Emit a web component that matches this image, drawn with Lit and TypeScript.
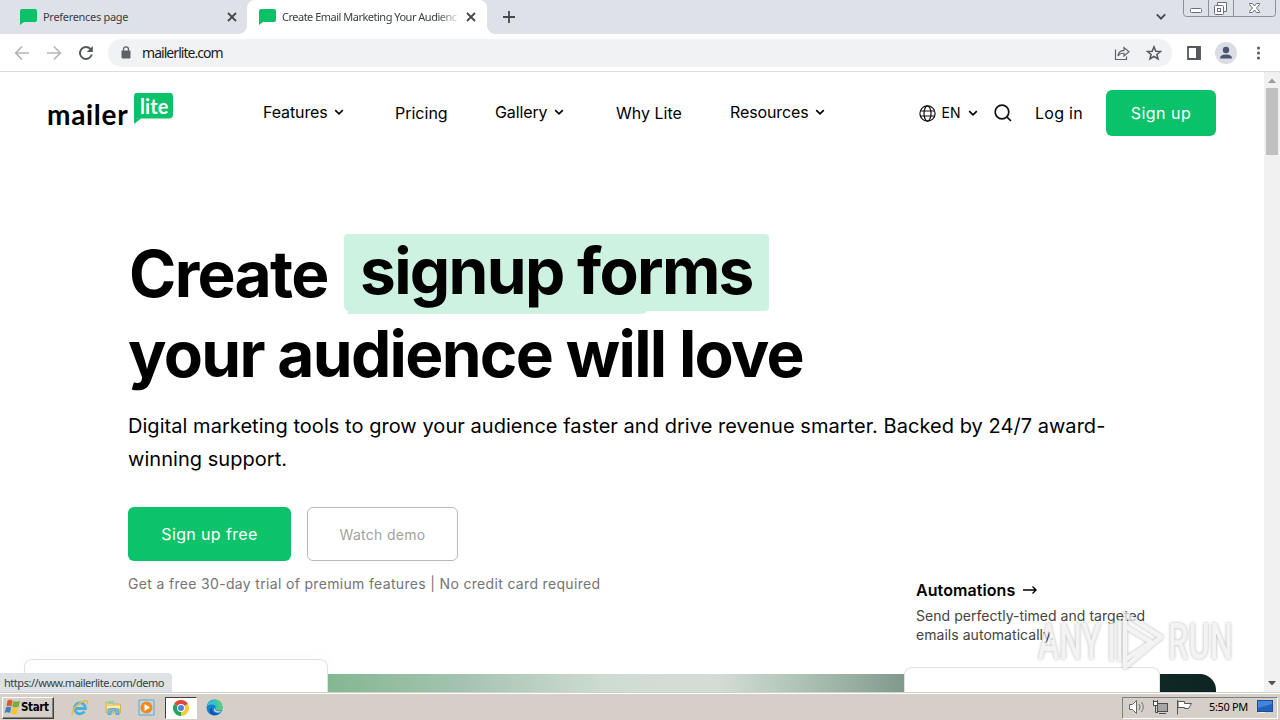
import { LitElement, html, css, svg } from "lit";
import { customElement, property } from "lit/decorators.js";

const chevron = (size = 10) => html`
  <svg class="chevron" width=${size} height=${size} viewBox="0 0 10 10" fill="none" stroke="currentColor" stroke-width="1.7">
    <path d="M1.2 3.2 5 6.8 8.8 3.2" />
  </svg>
`;

const favicon = html`
  <svg class="favicon" width="17" height="16" viewBox="0 0 17 16">
    <path d="M2 0h13q2 0 2 2v9q0 2-2 2H4L0 16V2Q0 0 2 0z" fill="#0ac168" />
  </svg>
`;

@customElement("browser-chrome")
export class BrowserChrome extends LitElement {
  static styles = css`
    :host {
      display: block;
      font-family: "Noto Sans", "Open Sans", sans-serif;
      color: #3c4043;
    }

    svg {
      display: block;
      flex: none;
    }

    .tabs {
      display: flex;
      height: 34px;
      background: #dee1e8;
    }

    .tab {
      display: flex;
      align-items: center;
      box-sizing: border-box;
      width: 247px;
      padding: 0 10px 1px 20px;
      font-size: 11px;
    }

    .tab.active {
      width: 240px;
      padding: 0 11px 1px 12px;
      background: #fff;
      border-radius: 8px 8px 0 0;
    }

    .title {
      width: 177px;
      margin: 0 11px 0 6px;
      white-space: nowrap;
      letter-spacing: -0.3px;
    }

    .active .title {
      margin-right: 7px;
      letter-spacing: -0.5px;
      mask-image: linear-gradient(to right, #000 155px, transparent 180px);
    }

    .curve {
      align-self: flex-end;
      width: 8px;
      height: 8px;
      background: radial-gradient(circle at 100% 0, #dee1e8 7.5px, #fff 8px);
    }

    .curve.left {
      margin-left: -8px;
      background: radial-gradient(circle at 0 0, #dee1e8 7.5px, #fff 8px);
    }

    .plus {
      margin: 11px 0 0 8px;
    }

    .search {
      margin: 13px 17px 0 auto;
    }

    .controls {
      margin-right: 3px;
    }

    .toolbar {
      display: flex;
      align-items: center;
      height: 37px;
      padding-left: 14px;
      border-bottom: 1px solid #dadce0;
      background: #fff;
    }

    .toolbar > svg {
      margin-right: 16px;
    }

    .toolbar > svg.reload {
      margin-right: 14px;
    }

    .toolbar > svg.more {
      margin-right: 0;
    }

    .omnibox {
      display: flex;
      flex: none;
      align-items: center;
      box-sizing: border-box;
      width: 1064px;
      height: 28px;
      padding: 0 10px 0 13px;
      border-radius: 14px;
      background: #f0f2f4;
      font-size: 14px;
      color: #202124;
    }

    .url {
      flex: 1;
      margin-left: 11px;
      letter-spacing: -0.95px;
    }

    .star {
      margin-left: 16px;
    }

    .side {
      margin-left: 15px;
    }

    .toolbar > svg.side {
      margin-right: 14px;
    }
  `;

  private close = html`
    <svg width="10" height="10" viewBox="0 0 10 10" stroke="#45484c" stroke-width="1.8">
      <path d="M1 1 9 9M9 1 1 9" />
    </svg>
  `;

  render() {
    return html`
      <div class="tabs">
        <div class="tab">
          ${favicon}<span class="title">Preferences page</span>${this.close}
        </div>
        <span class="curve left"></span>
        <div class="tab active">
          ${favicon}<span class="title">Create Email Marketing Your Audienc</span>${this.close}
        </div>
        <span class="curve"></span>
        <svg class="plus" width="12" height="12" viewBox="0 0 12 12" stroke="#45484c" stroke-width="1.8">
          <path d="M6 0V12M0 6H12" />
        </svg>
        <svg class="search" width="10" height="8" viewBox="0 0 10 8" fill="none" stroke="#45484c" stroke-width="1.9">
          <path d="M.8 1.3 5 5.7 9.2 1.3" />
        </svg>
        <svg class="controls" width="94" height="18" viewBox="0 0 94 18" fill="none" stroke="#8b909a">
          <path d="M.5 0V13.500q0 3 3 3H89.500q3 0 3-3V0M25.500 0V16M50.500 0V16" />
          <g stroke="#6a6f7b">
            <rect x="7.500" y="8.500" width="11" height="4" rx="1" fill="#fff" />
            <path d="M34.500 5V2.500H43.500V11.500H41" fill="#fff" />
            <rect x="31.500" y="5.500" width="9" height="9" rx="1" fill="#fff" />
            <rect x="34.500" y="8.500" width="3" height="3" />
            <path d="M66.500 3.500h3l2 2.500 2-2.500h3v1L73.500 8l3 3.500v1h-3l-2-2.500-2 2.500h-3v-1L69.500 8l-3-3.500z" fill="#fff" />
          </g>
        </svg>
      </div>
      <div class="toolbar">
        <svg width="16" height="16" viewBox="0 0 16 16" fill="none" stroke="#b4b6b9" stroke-width="1.700">
          <path d="M15 8H2M8 1.500 1.700 8 8 14.500" />
        </svg>
        <svg width="16" height="16" viewBox="0 0 16 16" fill="none" stroke="#b4b6b9" stroke-width="1.700">
          <path d="M1 8H14M8 1.500 14.300 8 8 14.500" />
        </svg>
        <svg class="reload" width="16" height="16" viewBox="0 0 16 16">
          <path d="M13.800 9.500A6 6 0 1 1 12.500 4" fill="none" stroke="#55585c" stroke-width="1.900" />
          <path d="M14.800 1V7H8.800z" fill="#55585c" />
        </svg>
        <div class="omnibox">
          <svg width="10" height="13" viewBox="0 0 10 13">
            <rect x="0.500" y="4.500" width="9" height="8" rx="1" fill="#5f6368" />
            <path d="M2.500 5V3.300a2.500 2.500 0 0 1 5 0V5" fill="none" stroke="#5f6368" stroke-width="1.300" />
          </svg>
          <span class="url">mailerlite.com</span>
          <svg width="16" height="16" viewBox="0 0 16 16" fill="none" stroke="#5f6368" stroke-width="1.200">
            <path d="M1.500 4.500V14.500H12.500V11.500M4 11Q4.500 5.500 10 5.300V2.500L15 6.800 10 11V8.300Q6 8 4 11z" />
          </svg>
          <svg class="star" width="16" height="16" viewBox="0 0 16 16" fill="none" stroke="#55585c" stroke-width="1.500">
            <path d="M8 1.800 9.800 6.200 14.500 6.500 10.900 9.500 12.100 14 8 11.500 3.900 14 5.100 9.500 1.500 6.500 6.200 6.200z" />
          </svg>
        </div>
        <svg class="side" width="14" height="14" viewBox="0 0 14 14">
          <path d="M1 1H13V13H1z" fill="none" stroke="#55585c" stroke-width="1.800" />
          <path d="M9 1H13.500V13H9z" fill="#55585c" />
        </svg>
        <svg width="22" height="22" viewBox="0 0 22 22">
          <circle cx="11" cy="11" r="11" fill="#dadde3" />
          <circle cx="11" cy="8" r="3.200" fill="#4a5573" />
          <path d="M5 16.500Q5 12.500 11 12.500T17 16.500z" fill="#4a5573" />
        </svg>
        <svg class="more" width="12" height="14" viewBox="0 0 12 14" fill="#55585c">
          <circle cx="5.500" cy="2" r="1.500" /><circle cx="5.500" cy="7" r="1.500" /><circle cx="5.500" cy="12" r="1.500" />
        </svg>
      </div>
    `;
  }
}

@customElement("site-header")
export class SiteHeader extends LitElement {
  static styles = css`
    :host {
      display: flex;
      align-items: center;
      box-sizing: border-box;
      height: 82px;
      padding: 0 48px 0 47px;
      font: 16px/20px Inter, sans-serif;
      color: #000;
    }

    svg {
      display: block;
    }

    .logo {
      display: flex;
      align-items: flex-start;
      width: 216px;
      height: 45px;
      font-family: Lato, "Open Sans", sans-serif;
    }

    .mailer {
      width: 87px;
      margin-top: 8px;
      font-size: 28px;
      line-height: 30px;
      font-weight: 700;
      letter-spacing: 0.7px;
    }

    .lite {
      display: block;
      box-sizing: border-box;
      width: 40px;
      height: 33px;
      margin-top: 2px;
      padding: 2px 0 0 6px;
      background: #09c269;
      clip-path: path("M4 0H35Q39 0 39 4V22Q39 26 35 26H7L0 31.500V4Q0 0 4 0z");
      color: #fff;
      font-size: 20px;
      line-height: 22px;
      font-weight: 700;
      letter-spacing: 0.1px;
    }

    nav {
      display: grid;
      grid-template-columns: 132px 100px 121px 114px 188.5px;
      letter-spacing: -0.12px;
    }

    .link {
      display: flex;
      align-items: center;
      gap: 6.5px;
      padding-bottom: 2px;
      white-space: nowrap;
    }

    .flat {
      padding-bottom: 0;
      letter-spacing: 0;
    }

    .actions {
      display: flex;
      align-items: center;
      flex: 1;
    }

    .lang {
      margin: 0 7.5px 0 6px;
      font-size: 14px;
    }

    .glass {
      margin-left: 16px;
    }

    .login {
      flex: 1;
      margin-left: 23px;
      white-space: nowrap;
      letter-spacing: 0.3px;
    }

    .signup {
      display: grid;
      place-items: center;
      width: 110px;
      height: 46px;
      border-radius: 6px;
      background: #09c269;
      color: #fff;
      letter-spacing: 0.5px;
    }
  `;

  private links = [
    { label: "Features", menu: true },
    { label: "Pricing", menu: false },
    { label: "Gallery", menu: true },
    { label: "Why Lite", menu: false },
    { label: "Resources", menu: true },
  ];

  render() {
    return html`
      <div class="logo"><span class="mailer">mailer</span><span class="lite">lite</span></div>
      <nav>
        ${this.links.map(
          (link) => html`
            <span class="link ${link.menu ? "" : "flat"}">${link.label}${link.menu ? chevron() : ""}</span>
          `
        )}
      </nav>
      <div class="actions">
        <svg width="17" height="17" viewBox="0 0 17 17" fill="none" stroke="#111" stroke-width="1.2">
          <circle cx="8.500" cy="8.500" r="7.600" />
          <ellipse cx="8.500" cy="8.500" rx="3.500" ry="7.600" />
          <path d="M1.500 6H15.500M1.500 11H15.500" />
        </svg>
        <span class="lang">EN</span>${chevron()}
        <svg class="glass" width="18" height="18" viewBox="0 0 18 18" fill="none" stroke="#111" stroke-width="1.700">
          <circle cx="8" cy="8" r="6.800" /><path d="M12.800 12.800 17 17" />
        </svg>
        <span class="login">Log in</span>
        <span class="signup">Sign up</span>
      </div>
    `;
  }
}

@customElement("hero-section")
export class HeroSection extends LitElement {
  static styles = css`
    :host {
      display: block;
      padding: 80px 128px 0;
      font-family: Inter, sans-serif;
      color: #000;
    }

    h1 {
      margin: 0;
      font-size: 64px;
      line-height: 80px;
      font-weight: 700;
      letter-spacing: -1.68px;
      white-space: nowrap;
    }

    .line {
      display: flex;
      height: 80px;
      align-items: flex-start;
    }

    .create {
      box-sizing: border-box;
      width: 216px;
      padding-left: 1px;
    }

    .highlight {
      box-sizing: border-box;
      width: 425px;
      height: 80px;
      padding-left: 16px;
      line-height: 74px;
      background: #cdf2e1;
      clip-path: path("M4 0H421Q425 0 425 4V73Q425 77 421 77H303Q301 80 298 80H3Q4 79 4 77Q0 76 0 71V4Q0 0 4 0z");
    }

    .lead {
      margin: 16px 0 0;
      font-size: 20px;
      line-height: 33px;
      letter-spacing: 0.045px;
      white-space: nowrap;
    }

    .buttons {
      display: flex;
      gap: 16px;
      margin-top: 31px;
    }

    .button {
      display: grid;
      place-items: center;
      box-sizing: border-box;
      height: 54px;
      border-radius: 6px;
    }

    .primary {
      width: 163px;
      background: #0cc36b;
      color: #fff;
      font-size: 16px;
      letter-spacing: 0.37px;
    }

    .secondary {
      width: 151px;
      border: 1px solid #b9b9b9;
      color: #a2a2a2;
      font-size: 14px;
      letter-spacing: 0.3px;
    }

    .note {
      margin: 13px 0 0;
      font-size: 14px;
      line-height: 20px;
      color: #747474;
      letter-spacing: 0.33px;
      white-space: nowrap;
    }
  `;

  render() {
    return html`
      <h1>
        <div class="line"><span class="create">Create</span><span class="highlight">signup forms</span></div>
        <div class="line">your audience will love</div>
      </h1>
      <p class="lead">
        Digital marketing tools to grow your audience faster and drive revenue smarter. Backed by 24/7 award-<br />winning support.
      </p>
      <div class="buttons">
        <span class="button primary">Sign up free</span>
        <span class="button secondary">Watch demo</span>
      </div>
      <p class="note">Get a free 30-day trial of premium features | No credit card required</p>
    `;
  }
}

@customElement("feature-preview")
export class FeaturePreview extends LitElement {
  static styles = css`
    :host {
      position: relative;
      display: flex;
      flex-direction: column;
      flex: 1;
      justify-content: space-between;
      min-height: 0;
      font-family: Inter, sans-serif;
    }

    .caption {
      margin: -14px 0 0 916px;
      white-space: nowrap;
    }

    .heading {
      display: flex;
      align-items: center;
      gap: 8px;
      font-size: 16px;
      line-height: 20px;
      font-weight: 600;
      letter-spacing: 0.08px;
      color: #000;
    }

    .text {
      margin-top: 6px;
      font-size: 14px;
      line-height: 19px;
      color: #444;
      letter-spacing: 0.04px;
    }

    .banner {
      height: 18px;
      margin: 0 48px 0 128px;
      border-radius: 0 16px 0 0;
      background: linear-gradient(to right, #71ad80 0, #84b792 199px, #a3c3ae 330px, #cfdcd3 480px, #d3ddd6 590px, #abc0b3 680px, #81998d 776px, #102b28 1010px, #0d2422);
    }

    .card {
      position: absolute;
      bottom: 0;
      box-sizing: border-box;
      border: 1px solid #e0e2e2;
      border-bottom: 0;
      border-radius: 8px 8px 0 0;
      background: #fff;
    }

    .left {
      left: 24px;
      width: 304px;
      height: 33px;
      box-shadow: 0 -6px 20px rgba(0, 0, 0, 0.015);
    }

    .right {
      left: 904px;
      width: 256px;
      height: 25px;
    }
  `;

  render() {
    return html`
      <div class="caption">
        <div class="heading">
          Automations
          <svg width="14" height="10" viewBox="0 0 14 10" fill="none" stroke="#000" stroke-width="1.400">
            <path d="M0 5H13M9.500 1.500 13 5 9.500 8.500" />
          </svg>
        </div>
        <div class="text">Send perfectly-timed and targeted<br />emails automatically.</div>
      </div>
      <div class="banner"></div>
      <div class="card left"></div>
      <div class="card right"></div>
    `;
  }
}

@customElement("scroll-bar")
export class ScrollBar extends LitElement {
  static styles = css`
    :host {
      display: flex;
      flex-direction: column;
      align-items: center;
      box-sizing: border-box;
      width: 16px;
      background: #f1f1f1;
    }

    .thumb {
      width: 12px;
      height: 67px;
      margin-bottom: auto;
      background: #c1c1c1;
    }

    svg {
      display: block;
    }
  `;

  render() {
    return html`
      <svg width="16" height="16" viewBox="0 0 16 16"><path d="M4 11 8 6.500 12 11z" fill="#9b9b9b" /></svg>
      <div class="thumb"></div>
      <svg width="16" height="17" viewBox="0 0 16 17"><path d="M4 6 8 10.500 12 6z" fill="#505050" /></svg>
    `;
  }
}

@customElement("any-run-mark")
export class AnyRunMark extends LitElement {
  @property({ type: Number }) width = 210;

  static styles = css`
    :host {
      display: block;
    }

    svg {
      display: block;
      overflow: visible;
    }

    text {
      font-family: Roboto, sans-serif;
      font-size: 50px;
      font-weight: 500;
    }

    .mark {
      filter: drop-shadow(0 0 1.5px rgba(0, 0, 0, 0.4));
    }
  `;

  render() {
    return html`
      <svg class="mark" width=${this.width} height="70" viewBox="0 0 210 70" fill="#f0f0f0" opacity="0.75">
        ${svg`
          <text x="6" y="53" textLength="63" lengthAdjust="spacingAndGlyphs">ANY</text>
          <text x="136" y="53" textLength="65" lengthAdjust="spacingAndGlyphs">RUN</text>
          <path d="M79.500 16V55M87.500 14V55" fill="none" stroke="#f0f0f0" stroke-width="4" />
          <path d="M93 8 129 31 93 61V13M93 20 119 36 93 54" fill="none" stroke="#f0f0f0" stroke-width="4.500" stroke-linejoin="round" stroke-linecap="round" />
        `}
      </svg>
    `;
  }
}

@customElement("task-bar")
export class TaskBar extends LitElement {
  static styles = css`
    :host {
      display: flex;
      align-items: center;
      box-sizing: border-box;
      height: 28px;
      padding: 2px 2px 0 2px;
      border-top: 1px solid #d5cec6;
      background: #d6cfc7;
      box-shadow: inset 0 1px #fff;
      color: #000;
    }

    svg {
      display: block;
      flex: none;
    }

    .start {
      display: flex;
      align-items: center;
      box-sizing: border-box;
      width: 52px;
      height: 22px;
      padding: 0 0 2px 1px;
      border: 1px solid;
      border-color: #fff #404040 #404040 #fff;
      box-shadow: inset -1px -1px #878078;
      font: bold 11.5px "DejaVu Sans Condensed", sans-serif;
      letter-spacing: -0.35px;
    }

    .apps {
      display: flex;
      align-items: center;
      margin-left: 9px;
    }

    .app {
      display: grid;
      place-items: center;
      box-sizing: border-box;
      width: 33.5px;
      height: 22px;
    }

    .app.active {
      width: 32px;
      margin: 0 1px;
      border: 1px solid;
      border-color: #404040 #fff #fff #404040;
      background: #fff;
    }

    .tray {
      display: flex;
      align-items: center;
      box-sizing: border-box;
      width: 156px;
      height: 22px;
      margin-left: auto;
      padding: 0 0 2px 5px;
      border: 1px solid;
      border-color: #808080 #fff #fff #808080;
    }

    .tray svg {
      margin-right: 7px;
    }

    .clock {
      width: 45px;
      margin: 0 9px 0 9px;
      font: 11px "Noto Sans", sans-serif;
      letter-spacing: -0.35px;
      white-space: nowrap;
    }
  `;

  render() {
    return html`
      <div class="start">
        <svg width="17" height="16" viewBox="0 0 17 16">
          <path d="M3.500 1.500Q6 0 8.500 1.500L7.500 7.500Q5 6 2.500 7.500z" fill="#dc5a2b" />
          <path d="M9.300 2Q12 3.300 16 1.700L14.500 8Q11 9 8.300 7.800z" fill="#74ae3d" />
          <path d="M2.200 8.300Q4.700 7 7.200 8.300L6 14Q3.500 12.500 .5 13.800z" fill="#3d7fc4" />
          <path d="M8.100 8.700Q11 10 14.100 8.900L12.800 14.700Q9.500 15.700 6.900 14.500z" fill="#f6c530" />
        </svg>
        Start
      </div>
      <div class="apps">
        <span class="app">
          <svg width="18" height="18" viewBox="0 0 18 18" fill="none">
            <path d="M13.500 12.500A5.500 5.500 0 1 1 14.500 9.500H5" stroke="#48afe2" stroke-width="2.800" />
            <path d="M1.500 16C-1 13 8 2 15.500 1.500Q17.500 2 16 5.500" stroke="#e9bd3b" stroke-width="1.500" />
          </svg>
        </span>
        <span class="app">
          <svg width="17" height="17" viewBox="0 0 17 17">
            <path d="M1 3H6L7.500 5H15.500V14H1z" fill="#f1d275" stroke="#c9a548" stroke-width=".7" />
            <path d="M3 2H9V5H3z" fill="#98d0a8" />
            <path d="M2 7H15V9H2z" fill="#fbecb4" />
            <path d="M3 15.500V10.500Q8.500 8 14 10.500V15.500H11V12H6V15.500z" fill="#79c1e4" stroke="#4a94bd" stroke-width=".7" />
          </svg>
        </span>
        <span class="app">
          <svg width="17" height="17" viewBox="0 0 17 17">
            <path d="M1 1H16V16H1z" fill="#b7dcef" stroke="#6aa3c4" />
            <circle cx="8.500" cy="8.500" r="6" fill="#f28b1d" />
            <path d="M6.500 5 12 8.500 6.500 12z" fill="#fff" />
          </svg>
        </span>
        <span class="app active">
          <svg width="16" height="16" viewBox="0 0 16 16">
            <path d="M8 8 1.070 4A8 8 0 0 1 14.930 4z" fill="#df4937" />
            <path d="M8 8 14.930 4A8 8 0 0 1 8 16z" fill="#f9ca35" />
            <path d="M8 8V16A8 8 0 0 1 1.070 4z" fill="#2da05a" />
            <circle cx="8" cy="8" r="3.900" fill="#fff" /><circle cx="8" cy="8" r="3" fill="#4384ee" />
          </svg>
        </span>
        <span class="app">
          <svg width="17" height="17" viewBox="0 0 17 17">
            <circle cx="8.500" cy="8.500" r="8" fill="#1680d0" />
            <path d="M.6 8A8 8 0 0 1 16.500 8Q16.500 12 11.500 11.500Q9 11 10 9Q10 5.500 6 5.500Q2 5.500.6 8z" fill="#35c3c8" />
            <path d="M9 .6Q16 1 16.500 8Q16.500 12 11.500 11.500Q14 5 9 .6z" fill="#58cf75" />
            <path d="M6 8Q5 15 13.500 14.500Q8 18 4.500 14.500Q2.500 10 6 8z" fill="#1454a5" />
            <path d="M9.500 8.500Q7.500 13 16 12Q12 15 8.500 12.500Q7 10 9.500 8.500z" fill="#d6cfc7" />
          </svg>
        </span>
      </div>
      <div class="tray">
        <svg width="17" height="16" viewBox="0 0 17 16" stroke="#666">
          <path d="M1.500 5.500H4.500L8.500 1.500V14.500L4.500 10.500H1.500z" fill="#fff" />
          <path d="M11 5Q13 8 11 11M13.500 3Q17 8 13.500 13" fill="none" stroke="#777" />
        </svg>
        <svg width="17" height="16" viewBox="0 0 17 16" stroke="#4d4d4d">
          <rect x="5.500" y="4.500" width="10" height="8" fill="#a5a5a5" />
          <path d="M7 14.500H14M1.500 1V5.500H5.500V1M3.500 5V13.500H6" fill="none" />
          <rect x="1.500" y="2.500" width="4" height="4" fill="#fff" />
        </svg>
        <svg width="17" height="16" viewBox="0 0 17 16" stroke="#555">
          <path d="M1.500 1V15.500" />
          <path d="M2 2.500H8.500V4.500H15.500L12.500 9.500H8.500V8.500H2z" fill="#fff" />
        </svg>
        <span class="clock">5:50 PM</span>
        <svg width="16" height="14" viewBox="0 0 16 14">
          <rect x=".5" y=".5" width="15" height="11" fill="#3f86dc" stroke="#1e4d96" />
          <path d="M1 8 15 4V11H1z" fill="#2563bb" />
          <path d="M2 12.500H8" stroke="#eef4ff" />
        </svg>
      </div>
    `;
  }
}

@customElement("app-root")
export class AppRoot extends LitElement {
  static styles = css`
    :host {
      position: relative;
      display: flex;
      flex-direction: column;
      width: 1280px;
      height: 720px;
      overflow: hidden;
      background: #fff;
    }

    .viewport {
      display: flex;
      flex: 1;
      min-height: 0;
    }

    .page {
      display: flex;
      flex-direction: column;
      width: 1264px;
      overflow: hidden;
    }

    .status {
      position: absolute;
      left: 0;
      bottom: 28px;
      box-sizing: border-box;
      width: 172px;
      height: 19px;
      padding-left: 4px;
      border-radius: 0 4px 0 0;
      background: #dee1e6;
      font: 11px/19px "Noto Sans", sans-serif;
      letter-spacing: -0.46px;
      color: #3c4043;
      white-space: nowrap;
    }

    .watermark {
      position: absolute;
      left: 1032px;
      top: 606px;
    }
  `;

  render() {
    return html`
      <browser-chrome></browser-chrome>
      <div class="viewport">
        <div class="page">
          <site-header></site-header>
          <hero-section></hero-section>
          <feature-preview></feature-preview>
        </div>
        <scroll-bar></scroll-bar>
      </div>
      <task-bar></task-bar>
      <div class="status">https://www.mailerlite.com/demo</div>
      <any-run-mark class="watermark"></any-run-mark>
    `;
  }
}

declare global {
  interface HTMLElementTagNameMap {
    "app-root": AppRoot;
  }
}
